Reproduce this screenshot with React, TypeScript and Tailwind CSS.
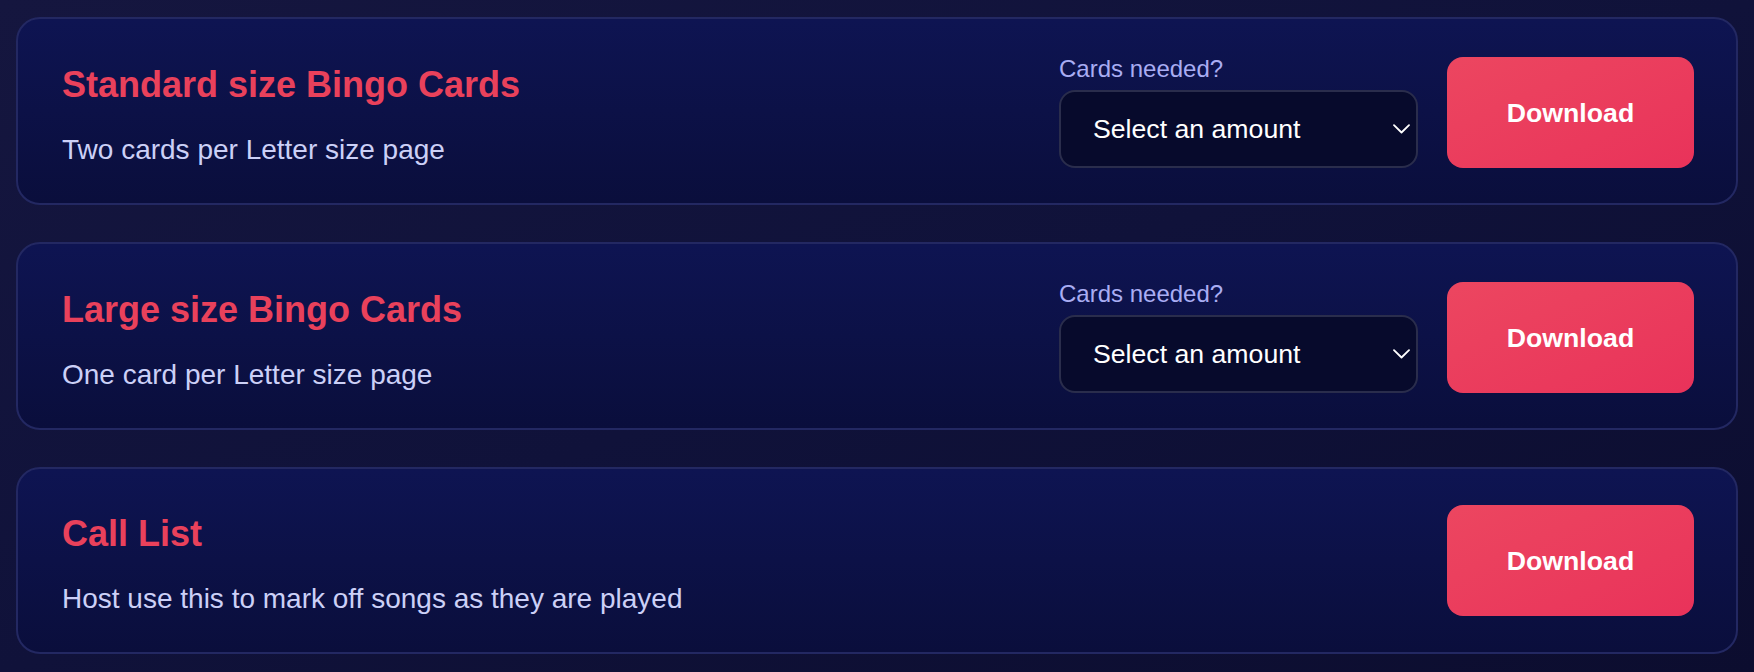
import { useState } from 'react';

type Item = {
  id: string;
  title: string;
  subtitle: string;
  withAmount: boolean;
};

const items: Item[] = [
  { id: 'standard', title: 'Standard size Bingo Cards', subtitle: 'Two cards per Letter size page', withAmount: true },
  { id: 'large', title: 'Large size Bingo Cards', subtitle: 'One card per Letter size page', withAmount: true },
  { id: 'calllist', title: 'Call List', subtitle: 'Host use this to mark off songs as they are played', withAmount: false },
];

const amounts = [10, 20, 30, 40, 50, 75, 100];

const AmountSelect = () => {
  const [value, setValue] = useState('');
  return (
    <div className="flex flex-col">
      <label className="text-[24px] leading-[29px] text-[#a9adf3] mb-[7px]">Cards needed?</label>
      <div className="relative">
        <select
          value={value}
          onChange={(e) => setValue(e.target.value)}
          className="appearance-none w-[359px] h-[78px] rounded-[16px] border-2 border-[#2a2d4c] bg-[#070a2c] pl-[32px] pr-[40px] text-[26.67px] text-white outline-none"
        >
          <option value="">Select an amount</option>
          {amounts.map((n) => (
            <option key={n} value={n}>
              {n} cards
            </option>
          ))}
        </select>
        <svg
          className="pointer-events-none absolute right-[8px] top-[34px]"
          width="17"
          height="10"
          viewBox="0 0 17 10"
          fill="none"
        >
          <path d="M1 1.2 L8.5 8.5 L16 1.2" stroke="white" strokeWidth="1.8" strokeLinecap="round" strokeLinejoin="round" />
        </svg>
      </div>
    </div>
  );
};

const DownloadCard = ({ item }: { item: Item }) => (
  <div className="flex items-center justify-between rounded-[24px] border-2 border-[#232862] bg-linear-to-b from-[#0e1452] to-[#0a0e3c] pl-[44px] pr-[42px] py-[35px]">
    {/* Text */}
    <div className="flex flex-col mt-[8px]">
      <h2 className="text-[36px] leading-[44px] font-bold text-[#e9415b]">{item.title}</h2>
      <p className="mt-[25px] text-[28px] leading-[36px] text-[#ccd0f7]">{item.subtitle}</p>
    </div>

    {/* Actions */}
    <div className="flex items-end gap-[29px]">
      {item.withAmount && <AmountSelect />}
      <button className="w-[247px] h-[111px] rounded-[16px] bg-linear-to-br from-[#ec4660] to-[#e9325a] text-[26.67px] font-bold text-white">
        Download
      </button>
    </div>
  </div>
);

export default function App() {
  return (
    <div
      className="min-h-screen w-full bg-linear-to-br from-[#15163f] via-[#10123a] to-[#0c0d2f] px-[16px] pt-[17px] pb-[17px]"
      style={{ fontFamily: '"Liberation Sans", Arial, Helvetica, sans-serif' }}
    >
      <div className="flex flex-col gap-[37px]">
        {items.map((item) => (
          <DownloadCard key={item.id} item={item} />
        ))}
      </div>
    </div>
  );
}
